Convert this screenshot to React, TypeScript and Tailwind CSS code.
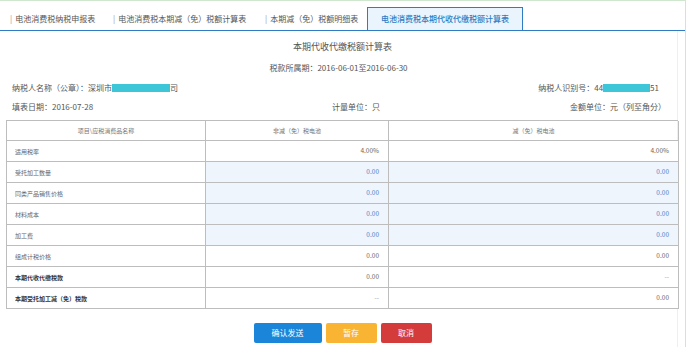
const tabs = [
  { title: "电池消费税纳税申报表", width: "w-[103px]" },
  { title: "电池消费税本期减（免）税额计算表", width: "w-[152px]" },
  { title: "本期减（免）税额明细表", width: "w-[102px]" },
];

type Cell = { value: string; tone?: "blue" | "dash" };

const rows: { label: string; bold?: boolean; input?: boolean; cells: [Cell, Cell] }[] = [
  { label: "适用税率", cells: [{ value: "4.00%" }, { value: "4.00%" }] },
  { label: "受托加工数量", input: true, cells: [{ value: "0.00", tone: "blue" }, { value: "0.00", tone: "blue" }] },
  { label: "同类产品销售价格", input: true, cells: [{ value: "0.00", tone: "blue" }, { value: "0.00", tone: "blue" }] },
  { label: "材料成本", input: true, cells: [{ value: "0.00", tone: "blue" }, { value: "0.00", tone: "blue" }] },
  { label: "加工费", input: true, cells: [{ value: "0.00", tone: "blue" }, { value: "0.00", tone: "blue" }] },
  { label: "组成计税价格", cells: [{ value: "0.00" }, { value: "0.00" }] },
  { label: "本期代收代缴税款", bold: true, cells: [{ value: "0.00" }, { value: "--", tone: "dash" }] },
  { label: "本期受托加工减（免）税款", bold: true, cells: [{ value: "--", tone: "dash" }, { value: "0.00" }] },
];

function ValueCell({ cell, input }: { cell: Cell; input?: boolean }) {
  const color =
    cell.tone === "blue" ? "text-[#4a7fc9]" : cell.tone === "dash" ? "text-[#999]" : "text-[#666]";
  return (
    <div
      className={`flex h-[21px] items-center justify-end border-b border-r border-[#bdbdbd] pr-[9px] text-[6.5px] ${color} ${
        input ? "bg-[#eef5fc]" : "bg-white"
      }`}
    >
      {cell.value}
    </div>
  );
}

export default function App() {
  return (
    <div className="h-[347px] w-[687px] overflow-hidden bg-white font-['Noto_Sans_CJK_SC','Liberation_Sans',sans-serif] text-[#555]">
      <div className="flex h-full w-[686px] flex-col border-r border-t border-[#cfe7cf]">
        {/* tab bar */}
        <div className="flex h-[30px] shrink-0 items-end border-b border-[#2f7cc2] pl-[10px] text-[8px]">
          {tabs.map((tab) => (
            <div key={tab.title} className={`flex h-[23px] items-center ${tab.width}`}>
              <span className="text-[#9a9a9a]">|</span>
              <span className="ml-[3px] whitespace-nowrap">{tab.title}</span>
            </div>
          ))}
          <div className="flex h-[23px] w-[156px] items-center justify-center border border-b-0 border-[#2f7cc2] bg-[#eaf4fd] font-medium whitespace-nowrap text-[#2f7cc2]">
            电池消费税本期代收代缴税额计算表
          </div>
        </div>

        <div className="flex-1 w-[678px] border-r border-[#efefef]">
          <div className="mt-[10px] pl-[8px] text-center text-[9px] leading-[12px] text-[#555]">
            本期代收代缴税额计算表
          </div>
          <div className="mt-[9px] text-center text-[8px] leading-[12px]">
            税款所属期：2016-06-01至2016-06-30
          </div>

          <div className="mt-[8px] flex items-center justify-between pl-[12px] pr-[18px] text-[8px] leading-[12px]">
            <div className="flex items-center">
              纳税人名称（公章）：深圳市
              <span className="inline-block h-[8px] w-[58px] bg-[#3cc6d8]" />司
            </div>
            <div className="flex items-center">
              纳税人识别号：44
              <span className="inline-block h-[8px] w-[47px] bg-[#3cc6d8]" />
              51
            </div>
          </div>

          <div className="mt-[7px] flex items-center pl-[12px] pr-[11px] text-[8px] leading-[12px]">
            <div className="w-[320px]">填表日期：2016-07-28</div>
            <div>计量单位：只</div>
            <div className="ml-auto">金额单位：元（列至角分）</div>
          </div>

          {/* table */}
          <div className="ml-[6px] mt-[7px] grid w-[672px] grid-cols-[199px_183px_290px] border-l border-t border-[#bdbdbd]">
            <div className="flex h-[20px] items-center justify-center border-b border-r border-[#bdbdbd] text-[6px] text-[#777]">
              项目\应税消费品名称
            </div>
            <div className="flex h-[20px] items-center justify-center border-b border-r border-[#bdbdbd] text-[6px] text-[#777]">
              非减（免）税电池
            </div>
            <div className="flex h-[20px] items-center justify-center border-b border-r border-[#bdbdbd] text-[6px] text-[#777]">
              减（免）税电池
            </div>

            {rows.map((row) => (
              <div key={row.label} className="contents">
                <div
                  className={`flex h-[21px] items-center border-b border-r border-[#bdbdbd] pl-[8px] text-[6px] ${
                    row.bold ? "font-bold text-[#333]" : "text-[#666]"
                  }`}
                >
                  {row.label}
                </div>
                <ValueCell cell={row.cells[0]} input={row.input} />
                <ValueCell cell={row.cells[1]} input={row.input} />
              </div>
            ))}
          </div>

          <div className="mt-[14px] flex justify-center gap-[4px] pl-[8px] text-[8px] text-white">
            <button className="h-[20px] w-[68px] rounded-[2px] bg-[#1b86d9]">确认发送</button>
            <button className="h-[20px] w-[51px] rounded-[2px] bg-[#fab433]">暂存</button>
            <button className="h-[20px] w-[51px] rounded-[2px] bg-[#d43b3b]">取消</button>
          </div>
        </div>
      </div>
    </div>
  );
}
